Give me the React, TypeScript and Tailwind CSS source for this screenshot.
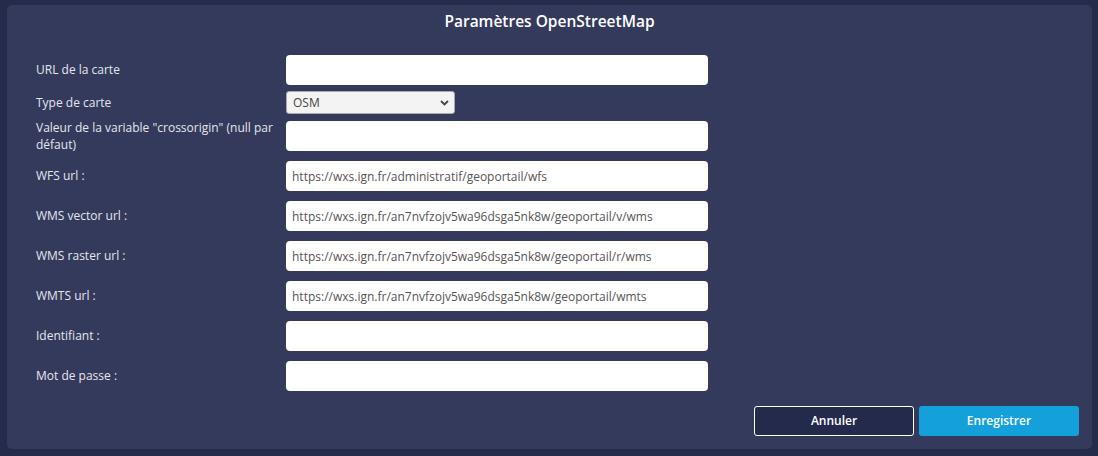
import { useState } from "react";

const fields = [
  { label: "WFS url :", value: "https://wxs.ign.fr/administratif/geoportail/wfs" },
  { label: "WMS vector url :", value: "https://wxs.ign.fr/an7nvfzojv5wa96dsga5nk8w/geoportail/v/wms" },
  { label: "WMS raster url :", value: "https://wxs.ign.fr/an7nvfzojv5wa96dsga5nk8w/geoportail/r/wms" },
  { label: "WMTS url :", value: "https://wxs.ign.fr/an7nvfzojv5wa96dsga5nk8w/geoportail/wmts" },
  { label: "Identifiant :", value: "" },
  { label: "Mot de passe :", value: "", type: "password" },
];

const inputClass =
  "w-[422px] h-[30px] rounded-[4px] bg-white px-[6px] text-[12px] text-[#555] outline-none";

export default function App() {
  const [mapType, setMapType] = useState("OSM");

  return (
    <div
      className="w-[1098px] h-[456px] bg-[#252b4b] pt-[5px] pl-[7px] pr-[6px] pb-[7px]"
      style={{ fontFamily: '"Open Sans", sans-serif' }}
    >
      <div className="h-full rounded-[5px] bg-[#343a5c] flex flex-col">
        <h2 className="h-[34px] flex items-center justify-center text-[15.5px] font-semibold text-white">
          Paramètres OpenStreetMap
        </h2>

        <div className="flex flex-col pl-[29px] text-[12px] text-[#e4e6ee]">
          <div className="flex items-center mt-[16px]">
            <label className="w-[250px]">URL de la carte</label>
            <input className={inputClass} />
          </div>

          <div className="flex items-center mt-[6px]">
            <label className="w-[250px]">Type de carte</label>
            <div className="relative w-[169px] h-[23px]">
              <select
                value={mapType}
                onChange={(e) => setMapType(e.target.value)}
                className="appearance-none w-full h-full rounded-[3px] border border-[#a9a9b0] bg-[#f3f3f3] pl-[6px] text-[12px] text-[#444] outline-none"
              >
                <option>OSM</option>
                <option>IGN</option>
              </select>
              <svg
                className="pointer-events-none absolute right-[6px] top-[9px]"
                width="9"
                height="6"
                viewBox="0 0 9 6"
              >
                <path d="M1 1l3.5 3.5L8 1" fill="none" stroke="#444" strokeWidth="1.8" />
              </svg>
            </div>
          </div>

          <div className="flex items-center mt-[5px]">
            <label className="w-[250px] leading-[17px]">
              Valeur de la variable "crossorigin" (null par défaut)
            </label>
            <input className={inputClass} />
          </div>

          {fields.map((f, idx) => (
            <div key={f.label} className={`flex items-center ${idx === 0 ? "mt-[8px]" : "mt-[10px]"}`}>
              <label className="w-[250px]">{f.label}</label>
              <input className={inputClass} type={f.type ?? "text"} defaultValue={f.value} />
            </div>
          ))}
        </div>

        <div className="flex justify-end gap-[5px] mt-[15px] pr-[13px]">
          <button className="w-[160px] h-[30px] rounded-[3px] border border-white bg-[#232a4b] text-[12px] font-semibold text-white">
            Annuler
          </button>
          <button className="w-[160px] h-[30px] rounded-[3px] bg-[#14a0db] text-[12px] font-semibold text-white">
            Enregistrer
          </button>
        </div>
      </div>
    </div>
  );
}
